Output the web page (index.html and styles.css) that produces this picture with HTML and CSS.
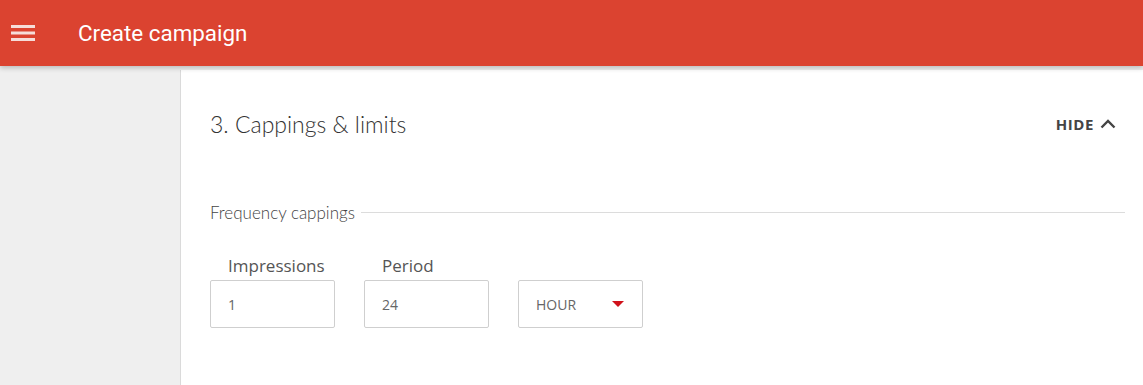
FILE: index.html
```
<html>
  <head>
    <link rel="stylesheet" href="styles.css">
  </head>
  <body>
    <header class="topbar">
      <button class="menu-btn" aria-label="menu">
        <svg width="24" height="18" viewBox="0 0 24 18"><path d="M0 1h24v3H0zM0 7.5h24v3H0zM0 14h24v3H0z" fill="#f6ddd9"/></svg>
      </button>
      <h1 class="topbar-title">Create campaign</h1>
    </header>
    <div class="layout">
      <aside class="sidebar"></aside>
      <main class="content">
        <section class="card">
          <div class="card-head">
            <h2 class="card-title">3. Cappings &amp; limits</h2>
            <button class="toggle">HIDE
              <svg width="16" height="10" viewBox="0 0 16 10"><path d="M1.5 8.5L8 2l6.5 6.5" fill="none" stroke="#444" stroke-width="2.4"/></svg>
            </button>
          </div>
          <fieldset class="group">
            <legend class="group-title">Frequency cappings</legend>
            <div class="fields">
              <label class="field">
                <span class="field-label">Impressions</span>
                <input class="field-input" value="1">
              </label>
              <label class="field">
                <span class="field-label">Period</span>
                <input class="field-input" value="24">
              </label>
              <div class="field">
                <span class="field-label">&nbsp;</span>
                <div class="select">
                  <span>HOUR</span>
                  <span class="caret"></span>
                </div>
              </div>
            </div>
          </fieldset>
        </section>
      </main>
    </div>
  </body>
</html>
```

FILE: styles.css
```
html {
  background: #efefef;
  font-family: "Open Sans", sans-serif;
  color: #444;
}
body {
  margin: 0;
  height: 385px;
  overflow: hidden;
}
.topbar {
  position: relative;
  z-index: 2;
  height: 66px;
  display: flex;
  align-items: center;
  background: #db4330;
  box-shadow: 0 2px 5px rgba(0, 0, 0, 0.22);
}
.menu-btn {
  padding: 0 0 0 11px;
  border: none;
  background: none;
  display: flex;
  align-items: center;
}
.topbar-title {
  margin: 0 0 0 43px;
  font-family: Roboto, sans-serif;
  font-weight: 400;
  font-size: 22.4px;
  color: #fff;
}
.layout {
  display: flex;
  height: 319px;
}
.sidebar {
  width: 180px;
  flex: none;
}
.content {
  flex: 1;
  padding-top: 4px;
}
.card {
  height: 100%;
  background: #fff;
  border-left: 1px solid #dadada;
  padding: 0 18px 0 29px;
}
.card-head {
  display: flex;
  align-items: center;
  justify-content: space-between;
  height: 108px;
}
.card-title {
  margin: 0;
  font-family: Lato, sans-serif;
  font-weight: 300;
  font-size: 23px;
  color: #333;
}
.toggle {
  border: none;
  background: none;
  padding: 0 9px 0 0;
  display: flex;
  align-items: center;
  gap: 6px;
  font-family: "Open Sans", sans-serif;
  font-weight: 700;
  font-size: 15px;
  letter-spacing: 0.6px;
  color: #444;
}
.group {
  margin: 24px 0 0;
  padding: 0;
  border: none;
  border-top: 1px solid #dcdcdc;
}
.group-title {
  padding: 0 6px 0 0;
  font-family: Lato, sans-serif;
  font-weight: 300;
  font-size: 17px;
  color: #444;
}
.fields {
  display: flex;
  gap: 29px;
  margin-top: 33px;
}
.field {
  display: flex;
  flex-direction: column;
  gap: 4px;
}
.field-label {
  padding-left: 18px;
  font-size: 17px;
  color: #555;
  line-height: 20px;
}
.field-input, .select {
  box-sizing: border-box;
  width: 125px;
  height: 48px;
  border: 1px solid #cfcfcf;
  border-radius: 2px;
  padding: 0 17px;
  font-family: "Open Sans", sans-serif;
  font-size: 14px;
  color: #666;
  outline: none;
}
.select {
  display: flex;
  align-items: center;
  justify-content: space-between;
}
.caret {
  width: 0;
  height: 0;
  border-left: 6px solid transparent;
  border-right: 6px solid transparent;
  border-top: 6px solid #d0121b;
  margin-right: 1px;
}
```
